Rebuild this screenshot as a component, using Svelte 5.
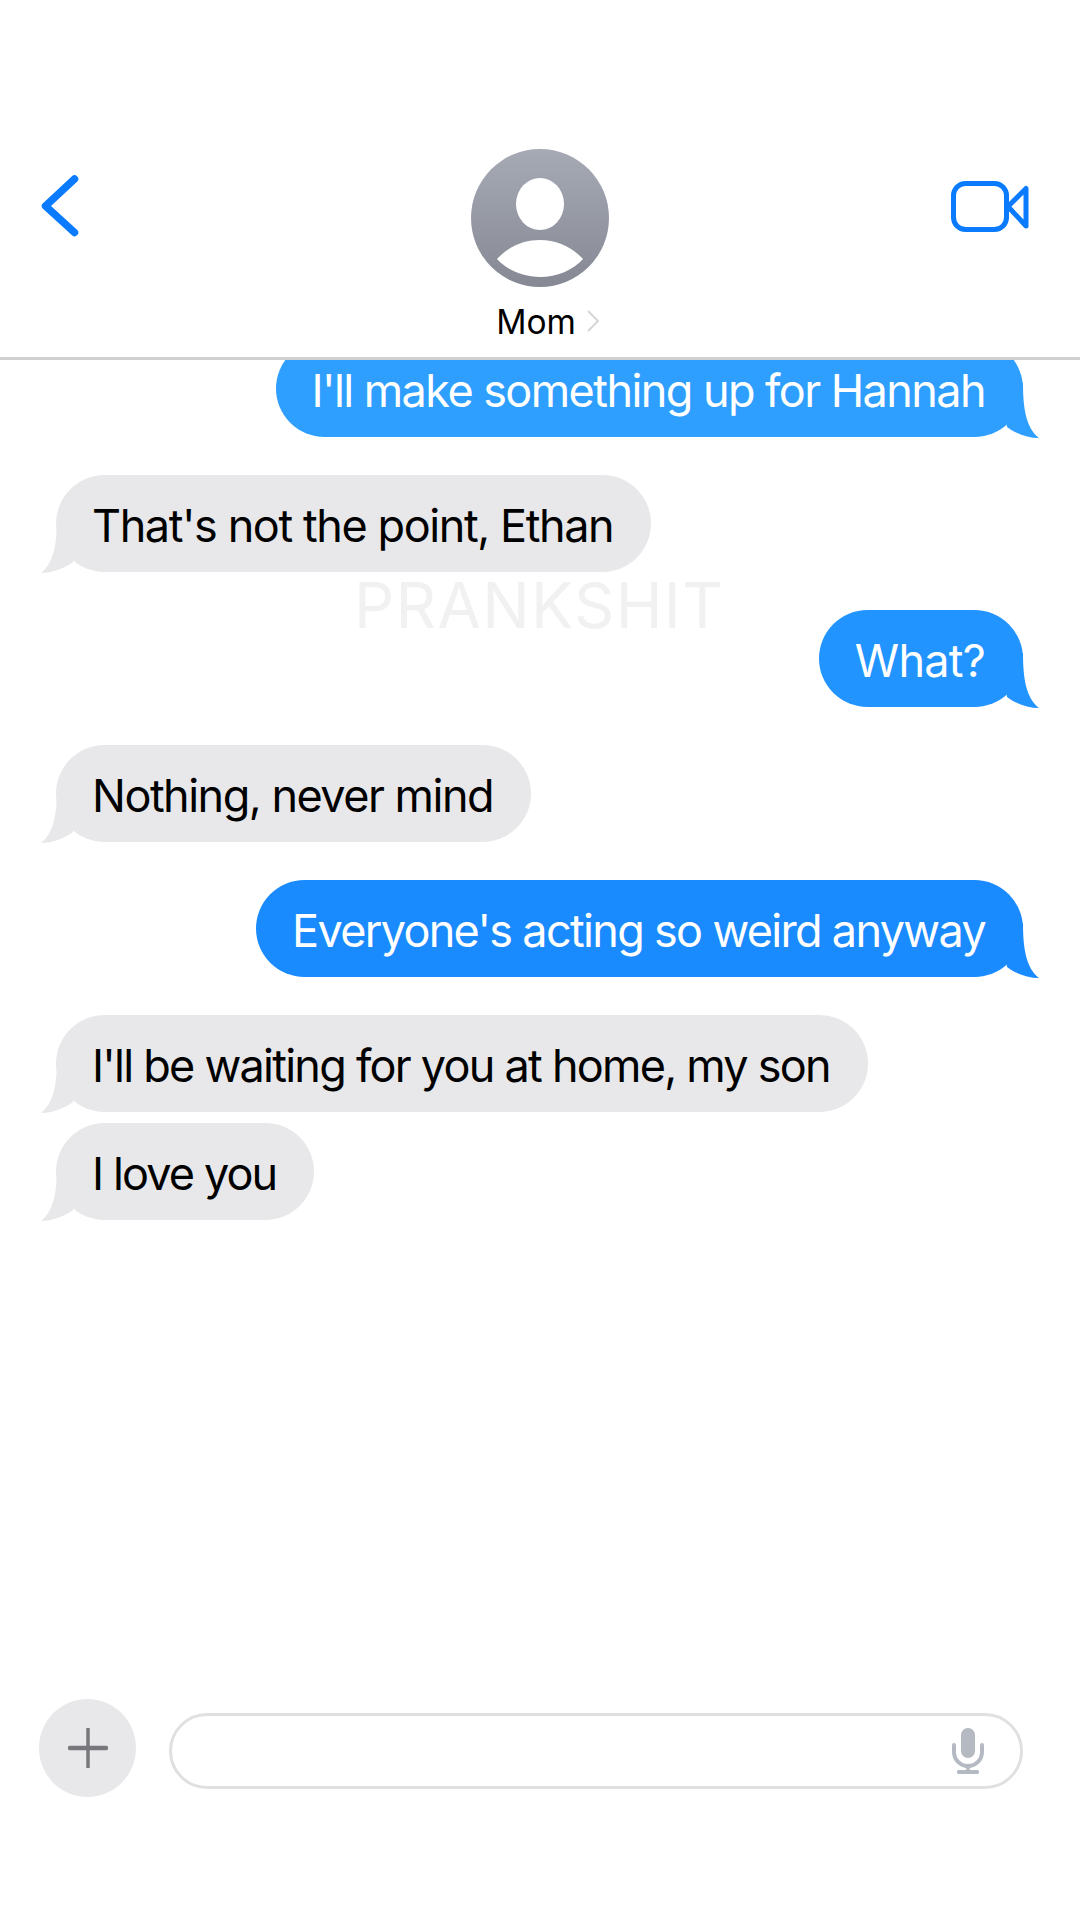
<script>
  const messages = [
    { text: "I'll make something up for Hannah", side: 'sent', tone: 'tone-a', track: -1.57 },
    { text: "That's not the point, Ethan", side: 'received', track: -1.41 },
    { text: 'What?', side: 'sent', tone: 'tone-b', track: -0.76 },
    { text: 'Nothing, never mind', side: 'received', track: -1.5 },
    { text: "Everyone's acting so weird anyway", side: 'sent', tone: 'tone-c', track: -1.68 },
    { text: "I'll be waiting for you at home, my son", side: 'received', track: -1.75 },
    { text: 'I love you', side: 'received', lead: 'tight', track: -1.87 }
  ];
</script>

<div class="screen">
  <header class="header">
    <div class="bar">
      <svg class="back" width="48" height="80" viewBox="0 0 48 80" aria-hidden="true">
        <path d="M39.5 13 L10.5 40 L39.5 66.5" fill="none" stroke="#0a7aff" stroke-width="7.5" stroke-linecap="round" stroke-linejoin="round" />
      </svg>
      <div class="contact">
        <svg class="avatar" width="138" height="138" viewBox="0 0 138 138" aria-hidden="true">
          <defs>
            <linearGradient id="avatarFill" x1="0" y1="0" x2="0" y2="1">
              <stop offset="0" stop-color="#a6aab5" />
              <stop offset="1" stop-color="#868994" />
            </linearGradient>
          </defs>
          <circle cx="69" cy="69" r="69" fill="url(#avatarFill)" />
          <ellipse cx="69" cy="55" rx="24" ry="26" fill="#fff" />
          <path d="M26 110 C38 97 53 91 69 91 C85 91 100 97 112 110 C102 121 86 128 69 128 C52 128 36 121 26 110 Z" fill="#fff" />
        </svg>
        <div class="name-row">
          <span class="name">Mom</span>
          <svg class="name-chevron" width="14" height="22" viewBox="0 0 14 22" aria-hidden="true">
            <path d="M2 1 L12 11 L2 21" fill="none" stroke="#d6d6d6" stroke-width="2" />
          </svg>
        </div>
      </div>
      <svg class="video" width="80" height="54" viewBox="0 0 80 54" aria-hidden="true">
        <rect x="2.5" y="2.5" width="53" height="46" rx="12" fill="none" stroke="#0a7aff" stroke-width="5" />
        <path d="M57 25.5 L75 7.5 L75 45 Z" fill="none" stroke="#0a7aff" stroke-width="5" stroke-linejoin="round" />
      </svg>
    </div>
  </header>

  <main class="thread">
    {#each messages as m}
      <div class="row {m.side} {m.lead ?? ''}">
        <div class="bubble {m.side} {m.tone ?? ''}" style:letter-spacing="{m.track}px">
          <svg class="tail" width="34" height="55" viewBox="0 0 34 55" aria-hidden="true">
            <path d="M18 0 C18 25 21 45 34 55 C22 55 10 50 2 44 L0 30 L0 0 Z" fill="currentColor" />
          </svg>
          <span class="text">{m.text}</span>
        </div>
      </div>
    {/each}
  </main>

  <div class="watermark">PRANKSHIT</div>

  <footer class="composer">
    <div class="plus">
      <svg width="40" height="40" viewBox="0 0 40 40" aria-hidden="true">
        <path d="M20 1 V39" stroke="#77777c" stroke-width="3.5" stroke-linecap="round" />
        <path d="M2 20 H38" stroke="#77777c" stroke-width="4.5" stroke-linecap="round" />
      </svg>
    </div>
    <div class="field">
      <svg class="mic" width="32" height="46" viewBox="0 0 32 46" aria-hidden="true">
        <rect x="9" y="0" width="14" height="30" rx="7" fill="#b5b9c2" />
        <path d="M2 17 V24 A14 14 0 0 0 30 24 V17" fill="none" stroke="#b5b9c2" stroke-width="4" stroke-linecap="round" />
        <path d="M16 37 V43" stroke="#b5b9c2" stroke-width="3.5" />
        <rect x="5" y="42" width="22" height="4" rx="1.5" fill="#b5b9c2" />
      </svg>
    </div>
  </footer>
</div>

<style>
  :global(body) {
    margin: 0;
    background: #fff;
  }

  .screen {
    position: relative;
    width: 1080px;
    height: 1920px;
    display: flex;
    flex-direction: column;
    background: #fff;
    overflow: hidden;
    font-family: Inter, "Liberation Sans", sans-serif;
  }

  .header {
    height: 357px;
    box-sizing: content-box;
    border-bottom: 3px solid #d0d0d2;
    flex: none;
  }

  .bar {
    display: grid;
    grid-template-columns: 1fr auto 1fr;
    padding: 149px 49px 0 35px;
  }

  .back {
    margin-top: 17px;
  }

  .contact {
    display: flex;
    flex-direction: column;
    align-items: center;
    transform: translateX(7px);
  }

  .avatar {
    display: block;
  }

  .name-row {
    position: relative;
    margin-top: 15px;
    height: 40px;
    padding-right: 8px;
    display: flex;
    align-items: center;
    color: #000;
  }

  .name {
    font-size: 33.5px;
    line-height: 40px;
  }

  .name-chevron {
    position: absolute;
    left: 90px;
    top: 8px;
  }

  .video {
    justify-self: end;
    margin-top: 32px;
  }

  .thread {
    flex: 1;
    min-height: 0;
    display: flex;
    flex-direction: column;
    gap: 38px;
    margin-top: -20px;
    padding: 0 57px 0 56px;
    clip-path: inset(20px 0 0 0);
  }

  .row {
    display: flex;
  }

  .row.sent {
    justify-content: flex-end;
  }

  .row.tight {
    margin-top: -27px;
  }

  .bubble {
    position: relative;
    box-sizing: border-box;
    height: 97px;
    padding: 5px 38px 0 36px;
    border-radius: 48.5px;
    font-size: 45px;
    line-height: 92px;
    white-space: nowrap;
  }

  .text {
    position: relative;
  }

  .bubble.received {
    background: #e8e8ea;
    color: #000;
  }

  .bubble.sent {
    color: #fff;
    background: var(--tone);
  }

  .tone-a {
    --tone: #2e9fff;
  }

  .tone-b {
    --tone: #2194ff;
  }

  .tone-c {
    --tone: #1a8aff;
  }

  .tail {
    position: absolute;
    bottom: -1px;
    display: block;
  }

  .bubble.sent .tail {
    right: -16px;
    color: var(--tone);
  }

  .bubble.received .tail {
    left: -15px;
    color: #e8e8ea;
    transform: scaleX(-1);
  }

  .watermark {
    position: absolute;
    left: 354px;
    top: 572px;
    font-size: 63px;
    line-height: 66px;
    font-weight: 400;
    letter-spacing: 1.3px;
    color: #f1f1f2;
  }

  .composer {
    flex: none;
    display: flex;
    align-items: center;
    gap: 33px;
    padding: 0 57px 123px 39px;
  }

  .plus {
    flex: none;
    width: 97px;
    height: 98px;
    border-radius: 50%;
    background: #e8e8ea;
    display: flex;
    align-items: center;
    justify-content: center;
  }

  .plus svg {
    display: block;
  }

  .field {
    flex: 1;
    box-sizing: border-box;
    height: 76px;
    margin-top: 5px;
    border: 3px solid #e0e0e2;
    border-radius: 38px;
    display: flex;
    align-items: center;
    justify-content: flex-end;
    padding-right: 36px;
  }

  .mic {
    display: block;
  }
</style>
